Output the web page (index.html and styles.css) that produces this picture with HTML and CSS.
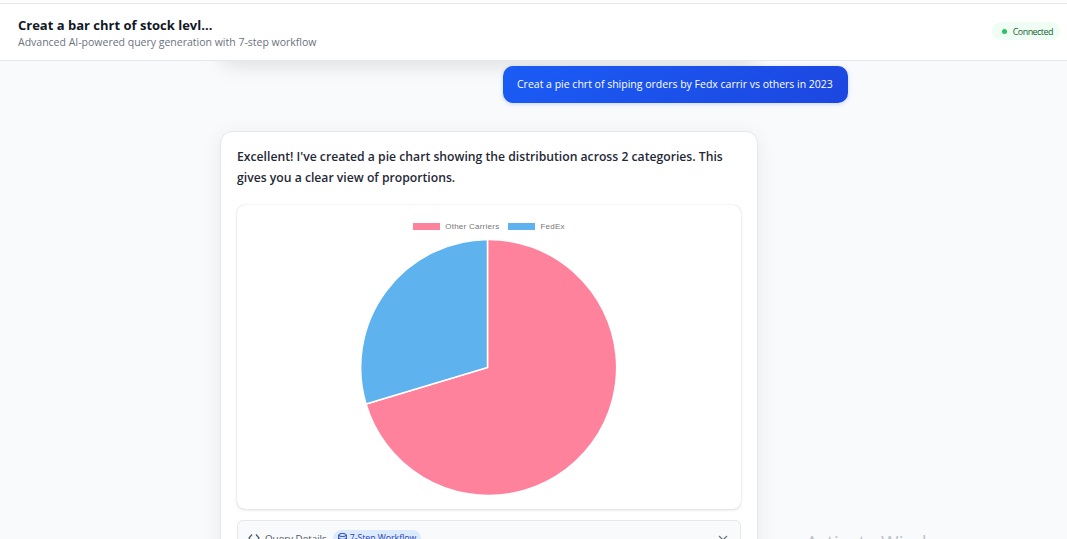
FILE: index.html
```html
<!DOCTYPE html>
<html lang="en">
<head>
    <meta charset="UTF-8">
    <meta name="viewport" content="width=device-width, initial-scale=1.0">
    <title>Query Chat</title>
    <link rel="stylesheet" href="styles.css">
</head>
<body>
    <div class="top-strip"></div>
    <header class="header">
        <div>
            <h1>Creat a bar chrt of stock levl...</h1>
            <p>Advanced AI-powered query generation with 7-step workflow</p>
        </div>
        <div class="status"><span class="status-dot"></span>Connected</div>
    </header>
    <main class="messages">
        <div class="prev-card"></div>
        <div class="user-row">
            <div class="user-bubble">Creat a pie chrt of shiping orders by Fedx carrir vs others in 2023</div>
        </div>
        <section class="card">
            <p class="answer">Excellent! I've created a pie chart showing the distribution across 2 categories. This gives you a clear view of proportions.</p>
            <div class="chart-box">
                <div class="legend">
                    <span class="swatch swatch-pink"></span><span class="legend-label">Other Carriers</span>
                    <span class="swatch swatch-blue"></span><span class="legend-label">FedEx</span>
                </div>
                <svg class="pie" width="258" height="258" viewBox="-127.5 -129.5 258 258">
                    <path d="M0 0 L0 -128 A128 128 0 1 1 -121.5 36.5 Z" fill="#ff829d" stroke="#fff" stroke-width="1.5"/>
                    <path d="M0 0 L-121.5 36.5 A128 128 0 0 1 0 -128 Z" fill="#5eb3ef" stroke="#fff" stroke-width="1.5"/>
                </svg>
            </div>
            <div class="details">
                <svg class="code-icon" width="12" height="12" viewBox="0 0 12 12"><path d="M4 2.5 L1 6 L4 9.5 M8 2.5 L11 6 L8 9.5" fill="none" stroke="#4b5563" stroke-width="1.2"/></svg>
                <span class="details-title">Query Details</span>
                <span class="badge">
                    <svg width="9" height="10" viewBox="0 0 9 10"><ellipse cx="4.5" cy="2" rx="3.8" ry="1.5" fill="none" stroke="#1e40af"/><path d="M.7 2 V8 C.7 9.8 8.3 9.8 8.3 8 V2 M.7 5 C.7 6.8 8.3 6.8 8.3 5" fill="none" stroke="#1e40af"/></svg>
                    7-Step Workflow
                </span>
                <svg class="chevron" width="10" height="6" viewBox="0 0 10 6"><path d="M1 1 L5 5 L9 1" fill="none" stroke="#6b7280" stroke-width="1.3"/></svg>
            </div>
        </section>
    </main>
    <div class="watermark">Activate Windows</div>
</body>
</html>
```

FILE: styles.css
```css
html, body {
    height: 100%;
    margin: 0;
    overflow: hidden;
}
body {
    font-family: "Open Sans", "Noto Sans", sans-serif;
    background-color: #f9fafb;
    color: #111827;
    display: flex;
    flex-direction: column;
}
.top-strip {
    height: 3px;
    background-color: #fdfdfd;
    border-bottom: 1px solid #e5e7eb;
    flex-shrink: 0;
}
.header {
    position: relative;
    z-index: 2;
    flex-shrink: 0;
    height: 57px;
    box-sizing: border-box;
    padding: 0 7px 0 18px;
    background-color: #ffffff;
    border-bottom: 1px solid #e5e7eb;
    display: flex;
    justify-content: space-between;
    align-items: center;
}
.header h1 {
    margin: 0;
    font-size: 13px;
    line-height: 20px;
    font-weight: 700;
}
.header p {
    margin: 0;
    font-size: 10.5px;
    line-height: 15px;
    color: #6b7280;
}
.status {
    display: flex;
    align-items: center;
    gap: 6px;
    height: 18px;
    margin-top: -2px;
    padding: 0 7px 0 10px;
    border-radius: 9px;
    background-color: #f0fdf4;
    color: #166534;
    font-size: 9px;
    letter-spacing: -0.55px;
}
.status-dot {
    width: 5px;
    height: 5px;
    border-radius: 50%;
    background-color: #22c55e;
}
.messages {
    width: 538px;
    margin-left: 220px;
    display: flex;
    flex-direction: column;
}
.prev-card {
    height: 20px;
    margin-top: -20px;
    border-radius: 12px;
    box-shadow: 0 4px 20px rgba(0, 0, 0, 0.12);
}
.user-row {
    display: flex;
    margin-top: 5px;
    margin-right: -90px;
    justify-content: flex-end;
}
.user-bubble {
    width: 345px;
    height: 37px;
    box-sizing: border-box;
    padding: 0 14px;
    border-radius: 10px;
    background: linear-gradient(135deg, #1a5cf5, #1c47e0);
    box-shadow: 0 1px 4px rgba(37, 99, 235, 0.25);
    color: #ffffff;
    font-size: 10.5px;
    line-height: 36px;
    white-space: nowrap;
}
.card {
    margin-top: 28px;
    padding: 14px 16px 15px;
    background-color: #ffffff;
    border: 1px solid #e5e7eb;
    border-radius: 12px;
    box-shadow: 0 4px 20px rgba(0, 0, 0, 0.07);
}
.answer {
    margin: 0 0 17px;
    font-size: 12.2px;
    line-height: 21px;
    font-weight: 600;
    color: #1f2937;
}
.chart-box {
    height: 304px;
    box-sizing: border-box;
    padding-top: 16px;
    border-radius: 8px;
    background-color: #ffffff;
    box-shadow: 0 0 1px rgba(0, 0, 0, 0.2), 0 1px 3px rgba(0, 0, 0, 0.12);
    display: flex;
    flex-direction: column;
    align-items: center;
}
.legend {
    display: flex;
    align-items: center;
    height: 10px;
    margin-bottom: 2px;
    font-family: "Liberation Sans", Arial, sans-serif;
    font-size: 8px;
    letter-spacing: 0.25px;
    color: #777;
}
.swatch {
    width: 27px;
    height: 7px;
    margin-right: 5px;
}
.swatch-pink {
    background-color: #ff829d;
}
.swatch-blue {
    background-color: #5eb3ef;
}
.legend-label {
    margin-right: 9px;
}
.legend-label:last-child {
    margin-right: 0;
}
.pie {
    margin-top: 5px;
}
.details {
    margin-top: 11px;
    height: 34px;
    box-sizing: border-box;
    padding: 2px 12px 0 10px;
    border: 1px solid #e5e7eb;
    border-radius: 6px;
    background-color: #f9fafb;
    display: flex;
    align-items: center;
    gap: 5px;
    font-size: 9.8px;
    color: #4b5563;
}
.details-title {
    margin-right: 1px;
}
.badge {
    display: inline-flex;
    align-items: center;
    gap: 3px;
    height: 17px;
    padding: 0 5px;
    border-radius: 9px;
    background-color: #dbeafe;
    color: #1e40af;
    font-size: 8.7px;
}
.chevron {
    margin-left: auto;
}
.watermark {
    position: absolute;
    left: 806px;
    top: 529px;
    font-family: "Open Sans", sans-serif;
    font-size: 19px;
    color: #bfc2c7;
    white-space: nowrap;
}
```
